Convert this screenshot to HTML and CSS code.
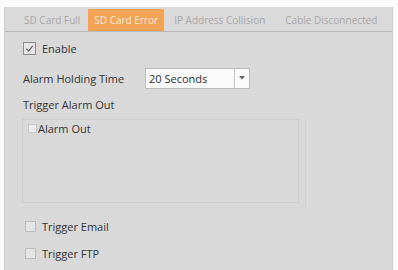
FILE: index.html
```html
<!DOCTYPE html>
<html>
<head>
<meta charset="utf-8">
<link rel="stylesheet" href="styles.css">
</head>
<body>
<div class="panel">
  <div class="tabs">
    <span class="tab">SD Card Full</span>
    <span class="tab active">SD Card Error</span>
    <span class="tab">IP Address Collision</span>
    <span class="tab">Cable Disconnected</span>
  </div>
  <div class="content">
    <label class="row enable"><span class="cb checked"><svg viewBox="0 0 10 10" width="9" height="9"><path d="M1.5 5.2 L4 7.8 L8.5 2" fill="none" stroke="#555" stroke-width="1.2"/></svg></span>Enable</label>
    <div class="row holding">
      <span class="lbl">Alarm Holding Time</span>
      <div class="select"><span class="val">20 Seconds</span><span class="arrow"><svg viewBox="0 0 6 4" width="6" height="4"><path d="M0 0 L6 0 L3 3.5Z" fill="#666"/></svg></span></div>
    </div>
    <div class="row title">Trigger Alarm Out</div>
    <div class="boxwrap">
      <div class="box">
        <label class="inner"><span class="cb small"></span>Alarm Out</label>
      </div>
    </div>
    <label class="row trig email"><span class="cb"></span>Trigger Email</label>
    <label class="row trig ftp"><span class="cb"></span>Trigger FTP</label>
  </div>
</div>
</body>
</html>
```
FILE: styles.css
```css
html, body {
  margin: 0;
  padding: 0;
  background: #fbfbfb;
}
body {
  width: 398px;
  height: 270px;
  overflow: hidden;
  font-family: "Open Sans", "DejaVu Sans", sans-serif;
  font-size: 11px;
  color: #333;
}
.panel {
  margin: 7px 5px 0 4px;
  height: 263px;
  background: #d9d9d9;
  border-left: 1px solid #cfcfcf;
  border-right: 1px solid #cfcfcf;
}
.tabs {
  display: flex;
  align-items: flex-end;
  height: 24px;
  padding-left: 14px;
  border-bottom: 1px solid #b9b9b9;
  background: #dadada;
}
.tab {
  display: flex;
  align-items: center;
  height: 22px;
  padding: 0 5px;
  margin-right: 3px;
  color: #a7a7a7;
  font-size: 10px;
  white-space: nowrap;
}
.tab.active {
  background: #f1a455;
  color: #fbe9d6;
  padding: 0 6px;
  margin-right: 5px;
}
.tab:nth-child(3) { margin-right: 10px; }
.content {
  padding: 0 0 0 17px;
}
.row {
  display: flex;
  align-items: center;
}
.cb {
  display: inline-block;
  width: 11px;
  height: 11px;
  border: 1px solid #bdbdbd;
  background: #e4e4e4;
  box-sizing: border-box;
  margin-right: 6px;
  flex: none;
}
.cb.checked {
  width: 13px;
  height: 13px;
  border: 1px solid #8c8c8c;
  background: #e6e6e6;
  display: flex;
  align-items: center;
  justify-content: center;
  margin-left: 1px;
}
.enable {
  margin-top: 9px;
  height: 15px;
}
.holding {
  margin-top: 11px;
  height: 22px;
}
.lbl {
  width: 122px;
  padding-left: 1px;
}
.select {
  display: flex;
  width: 105px;
  height: 21px;
  background: #fafafa;
  border: 1px solid #bcbcbc;
  box-sizing: border-box;
}
.val {
  flex: 1;
  padding-left: 3px;
  line-height: 19px;
  color: #2e2e2e;
}
.arrow {
  width: 14px;
  border-left: 1px solid #c4c4c4;
  display: flex;
  align-items: center;
  justify-content: center;
}
.title {
  margin-top: 7px;
  height: 17px;
  padding-left: 1px;
}
.boxwrap {
  margin-top: 6px;
  width: 283px;
  height: 88px;
  border-right: 1px solid #d2d2d2;
  border-bottom: 1px solid #d3d3d3;
}
.box {
  width: 277px;
  height: 84px;
  border: 1px solid #cecece;
  box-sizing: border-box;
  padding: 1px 0 0 5px;
}
.inner {
  display: flex;
  align-items: center;
  height: 15px;
}
.cb.small {
  width: 9px;
  height: 9px;
  border-color: #c8c8c8;
  background: #ececec;
  margin-right: 1px;
}
.trig {
  height: 15px;
  padding-left: 3px;
}
.email { margin-top: 11px; }
.ftp { margin-top: 12px; }
```
